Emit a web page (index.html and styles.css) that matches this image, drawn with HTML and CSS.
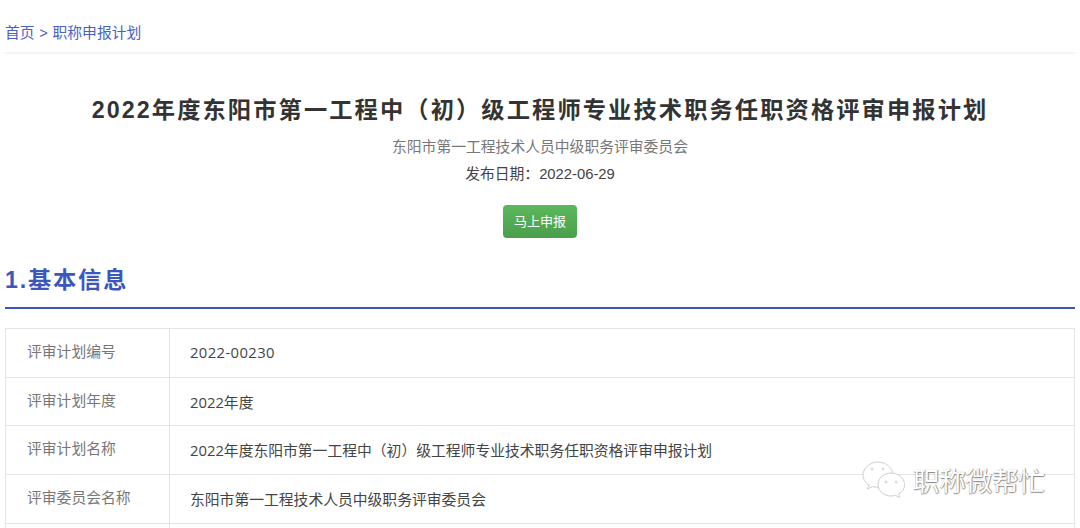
FILE: index.html
```html
<!DOCTYPE html>
<html lang="zh-CN">
<head>
    <meta charset="UTF-8">
    <meta name="viewport" content="width=device-width, initial-scale=1.0">
    <title>职称申报计划</title>
    <link rel="stylesheet" href="styles.css">
</head>
<body>
    <div class="container">
        <div class="breadcrumb"><a href="#">首页</a> &gt; <a href="#">职称申报计划</a></div>
        <div class="head">
            <h1>2022年度东阳市第一工程中（初）级工程师专业技术职务任职资格评审申报计划</h1>
            <p class="org">东阳市第一工程技术人员中级职务评审委员会</p>
            <p class="date">发布日期：2022-06-29</p>
            <a class="btn" href="#">马上申报</a>
        </div>
        <h2>1.基本信息</h2>
        <table class="info">
            <tr><th>评审计划编号</th><td class="code">2022-00230</td></tr>
            <tr><th>评审计划年度</th><td>2022年度</td></tr>
            <tr><th>评审计划名称</th><td>2022年度东阳市第一工程中（初）级工程师专业技术职务任职资格评审申报计划</td></tr>
            <tr><th>评审委员会名称</th><td>东阳市第一工程技术人员中级职务评审委员会</td></tr>
            <tr><th>&nbsp;</th><td>&nbsp;</td></tr>
        </table>
    </div>
    <div class="watermark">
        <svg class="wm-icon" width="44" height="38" viewBox="0 0 44 38" fill="#fff" stroke="#cfcfcf" stroke-width="1">
            <path d="M16 1C8 1 1 7 1 14c0 4 2 7.500 6 10l-1.500 4 5-2.500c2 .6 3.500 .8 5.500 .8 8 0 15-5.500 15-12.300S24 1 16 1z"/>
            <path d="M29 12c-7 0-13 5-13 11.500S22 35 29 35c1.500 0 3-.2 4.500-.7l4 2.200-1-3.500c4-2 6-5 6-9.500C42.500 17 36 12 29 12z"/>
            <circle cx="10" cy="8" r="1"/><circle cx="21" cy="8" r="1"/>
            <circle cx="24" cy="21" r="1"/><circle cx="34" cy="21" r="1"/>
        </svg>
        <span>职称微帮忙</span>
    </div>
</body>
</html>
```

FILE: styles.css
```css
html, body {
    height: 528px;
    overflow: hidden;
}
body {
    margin: 0;
    background: #fff;
    color: #333;
    font-family: "Liberation Sans", "Noto Sans CJK SC", sans-serif;
    font-size: 14.8px;
    position: relative;
}
.container {
    height: 528px;
    overflow: hidden;
    padding: 0 5px;
}
.breadcrumb {
    height: 54px;
    box-sizing: border-box;
    padding-top: 25px;
    line-height: 16px;
    word-spacing: .5px;
    color: #4a62c4;
    border-bottom: 2px solid #f3f3f3;
}
.breadcrumb a {
    color: #4a62c4;
    text-decoration: none;
}
.head {
    text-align: center;
}
h1 {
    margin: 41px 0 0;
    font-size: 23.25px;
    line-height: 30px;
    letter-spacing: 2.1px;
    color: #333;
}
.org {
    margin: 12px 0 0;
    line-height: 20px;
    color: #777;
}
.date {
    margin: 7px 0 0;
    line-height: 20px;
    color: #444;
}
.btn {
    display: inline-block;
    margin-top: 21px;
    width: 74px;
    height: 33px;
    line-height: 33px;
    font-size: 13px;
    color: #fff;
    text-decoration: none;
    border-radius: 4px;
    background: linear-gradient(#5cb85c, #4a9f4a);
}
h2 {
    margin: 26px 0 0;
    padding-bottom: 11px;
    font-size: 23.25px;
    line-height: 32px;
    letter-spacing: 1.8px;
    color: #3b57bd;
    border-bottom: 2px solid #3b57bd;
}
.info {
    width: 100%;
    margin-top: 19px;
    border-collapse: collapse;
    border: 1px solid #e4e4e4;
}
.info th, .info td {
    box-sizing: border-box;
    height: 48.7px;
    padding: 0 20px 1px;
    border: 1px solid #e4e4e4;
    text-align: left;
    font-weight: normal;
}
.info th {
    width: 164px;
    padding: 0 20px 5px 21px;
    color: #777;
}
.info td {
    font-family: "Open Sans", "Noto Sans CJK SC", sans-serif;
    color: #444;
}
.info .code {
    letter-spacing: .4px;
}
.watermark {
    position: absolute;
    left: 862px;
    top: 460px;
    display: flex;
    align-items: center;
    gap: 7px;
    font-size: 26.4px;
    color: #fff;
    text-shadow: 1px 0 1px #888, 0 1px 1px #888;
}
```
